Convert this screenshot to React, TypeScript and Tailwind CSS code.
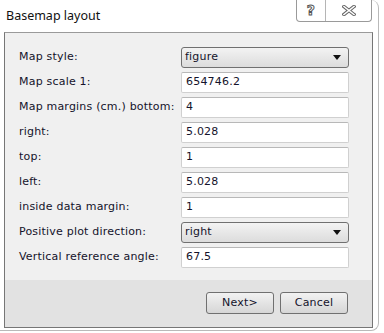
import React from "react";

type Row = { label: string; value: string; select?: boolean };

const ROWS: Row[] = [
  { label: "Map style:", value: "figure", select: true },
  { label: "Map scale 1:", value: "654746.2" },
  { label: "Map margins (cm.) bottom:", value: "4" },
  { label: "right:", value: "5.028" },
  { label: "top:", value: "1" },
  { label: "left:", value: "5.028" },
  { label: "inside data margin:", value: "1" },
  { label: "Positive plot direction:", value: "right", select: true },
  { label: "Vertical reference angle:", value: "67.5" },
];

function Field({ row }: { row: Row }) {
  if (row.select) {
    return (
      <div className="flex h-[21px] w-[168px] items-center justify-between rounded-[3px] border border-[#707070] bg-gradient-to-b from-[#f3f3f3] to-[#dcdcdc] pl-[3px] pr-[7px]">
        <span>{row.value}</span>
        <svg width="8" height="5" viewBox="0 0 8 5">
          <path d="M0 0 H8 L4 5 Z" fill="#111" />
        </svg>
      </div>
    );
  }
  return (
    <div className="flex h-[21px] w-[168px] items-center rounded-[2px] border border-[#d0d0d0] border-t-[#b8b8b8] bg-white pl-[4px]">
      {row.value}
    </div>
  );
}

function CaptionButtons() {
  return (
    <div className="absolute left-[296px] top-0 flex h-[22px] w-[76px] rounded-b-[4px] border border-t-0 border-[#9a9a9a] bg-white">
      <div className="flex w-[29px] items-center justify-center border-r border-[#b5b5b5] font-['DejaVu_Sans',sans-serif] text-[14px] font-bold text-white [-webkit-text-stroke:1px_#555]">
        ?
      </div>
      <div className="flex flex-1 items-center justify-center">
        <svg width="14" height="11" viewBox="0 0 14 11">
          <path d="M2 1.5 L12 9.5 M12 1.5 L2 9.5" stroke="#666" strokeWidth="3.5" strokeLinecap="square" />
          <path d="M2 1.5 L12 9.5 M12 1.5 L2 9.5" stroke="#fff" strokeWidth="1.6" strokeLinecap="square" />
        </svg>
      </div>
    </div>
  );
}

export default function App() {
  return (
    <div className="relative h-[333px] w-[384px] overflow-hidden bg-white font-['DejaVu_Sans',sans-serif] text-[11px] tracking-[0.2px] text-[#14132b]">
      <div className="h-[331px] w-[379px] rounded-r-[8px] border-r border-b border-[#b9b9b9]">
        <div className="h-[32px] pl-[6px] pt-[7px] font-['Noto_Sans',sans-serif] text-[12.5px] tracking-normal text-[#111]">
          Basemap layout
        </div>
        <div className="ml-[4px] flex h-[296px] w-[369px] flex-col border border-[#767676] border-t-[#9a9a9a]">
          <div className="flex flex-1 flex-col gap-[4px] bg-[#f0f0f0] pl-[14px] pt-[14px]">
            {ROWS.map((row) => (
              <div key={row.label} className="flex items-center">
                <div className="w-[162px]">{row.label}</div>
                <Field row={row} />
              </div>
            ))}
          </div>
          <div className="flex h-[47px] justify-end gap-[6px] bg-[#e2e2e2] pr-[24px] pt-[12px]">
            <button className="h-[22px] w-[68px] rounded-[3px] border border-[#707070] bg-gradient-to-b from-[#f2f2f2] to-[#d6d6d6] text-[11px]">
              Next&gt;
            </button>
            <button className="h-[22px] w-[68px] rounded-[3px] border border-[#707070] bg-gradient-to-b from-[#f2f2f2] to-[#d6d6d6] text-[11px]">
              Cancel
            </button>
          </div>
        </div>
      </div>
      <CaptionButtons />
    </div>
  );
}
